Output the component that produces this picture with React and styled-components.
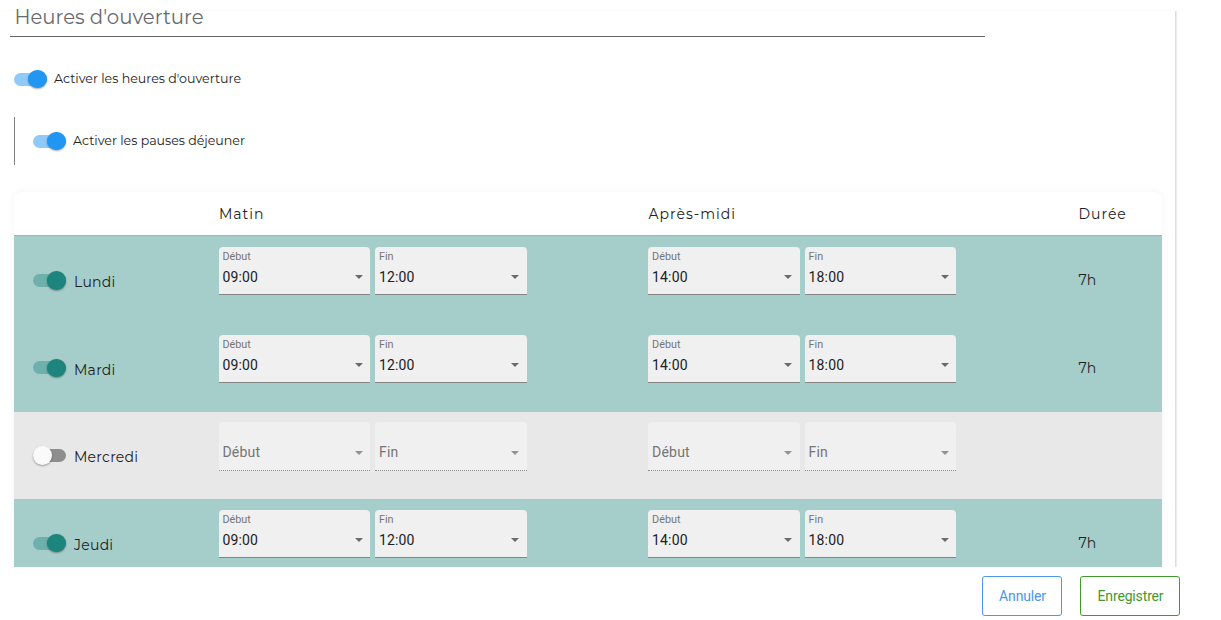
import React, { useState } from 'react'
import styled, { createGlobalStyle, ThemeProvider } from 'styled-components'

const theme = {
  colors: {
    text: '#212121',
    title: '#666a6f',
    blue: '#2196f3',
    blueTrack: '#90caf9',
    green: '#1d857d',
    greenTrack: '#6eb0ab',
    rowOn: '#a5ceca',
    rowOff: '#e8e8e8',
    field: '#f0f0f0',
    cancel: '#4a98e6',
    save: '#44992c',
  },
  fonts: {
    heading: "Montserrat, Inter, 'Open Sans', sans-serif",
    body: "Roboto, 'Liberation Sans', sans-serif",
  },
};

const GlobalStyle = createGlobalStyle`
  * {
    box-sizing: border-box;
  }

  body {
    margin: 0;
    background: #fff;
    color: ${({theme}) => theme.colors.text};
    font-family: ${({theme}) => theme.fonts.heading};
  }
`;

const Page = styled.div`
  display: flex;
  flex-direction: column;
  width: 1221px;
  height: 620px;
  overflow: hidden;
`;

const ScrollArea = styled.div`
  height: 567px;
  padding-top: 11px;
  overflow: hidden;
`;

const Card = styled.section`
  width: 1176px;
  height: 900px;
  padding-left: 14px;
  border-right: 1px solid #dedede;
  box-shadow: 1px 0 1px rgba(0, 0, 0, 0.07);
`;

const Title = styled.h2`
  width: 975px;
  height: 26px;
  margin: 0 0 0 -4px;
  padding-left: 4.4px;
  border-bottom: 1px solid #5f6368;
  color: ${({theme}) => theme.colors.title};
  font-size: 19.7px;
  font-weight: 400;
  line-height: 13px;
`;

const Option = styled.div`
  display: flex;
  align-items: center;
  height: 48px;
  margin-top: ${({$nested}) => $nested ? '14px' : '18px'};
  padding-left: ${({$nested}) => $nested ? '18px' : '0'};
  border-left: ${({$nested}) => $nested ? '1px solid #808080' : 'none'};
`;

const OptionLabel = styled.span`
  margin-left: 7px;
  padding-bottom: 2px;
  font-size: 12.6px;
`;

const Track = styled.button`
  display: flex;
  align-items: center;
  justify-content: ${({$on}) => $on ? 'flex-end' : 'flex-start'};
  flex: none;
  width: 32.5px;
  height: 13px;
  margin: 0 0.5px 0 0;
  padding: 0;
  border: none;
  border-radius: 7px;
  background: ${({theme, $on, $color}) => $on ? theme.colors[$color + 'Track'] : '#8e8e8e'};
  cursor: pointer;
`;

const Thumb = styled.span`
  flex: none;
  width: 18.5px;
  height: 18.5px;
  border-radius: 50%;
  background: ${({theme, $on, $color}) => $on ? theme.colors[$color] : '#fafafa'};
  box-shadow: 0 1px 2px rgba(0, 0, 0, 0.35);
`;

const Table = styled.div`
  width: 1148px;
  margin-top: 27px;
  border-radius: 8px 8px 0 0;
  box-shadow: 0 0 9px rgba(0, 0, 0, 0.05);
`;

const HeaderRow = styled.div`
  display: grid;
  grid-template-columns: 204.7px 429.6px 429.9px 1fr;
  align-items: center;
  height: 44.4px;
  border-bottom: 1px solid #a9b0af;
  font-size: 14px;
`;

const HeaderCell = styled.span`
  padding: 1px 0 0 0.3px;
  letter-spacing: 1px;
`;

const DayRow = styled.div`
  display: grid;
  grid-template-columns: 204.7px 429.6px 429.9px 1fr;
  height: 87.6px;
  padding-top: 10.6px;
  background: ${({theme, $on}) => $on ? theme.colors.rowOn : theme.colors.rowOff};
`;

const DayCell = styled.div`
  display: flex;
  align-items: center;
  height: 66.6px;
  padding-left: 19px;
`;

const DayName = styled.span`
  margin-left: 8px;
  padding-top: 3.4px;
  font-size: 14px;
  letter-spacing: 0.25px;
`;

const Duration = styled.span`
  display: flex;
  align-items: center;
  height: 67px;
  padding-left: 0.4px;
  font-size: 14px;
`;

const Period = styled.div`
  display: flex;
  gap: 5px;
`;

const Field = styled.div`
  display: flex;
  align-items: center;
  justify-content: space-between;
  width: 151.5px;
  height: ${({$on}) => $on ? '48px' : '49px'};
  padding: 0 6.5px 0 3.8px;
  border-bottom: 1px ${({$on}) => $on ? 'solid #858585' : 'dotted #8c8c8c'};
  border-radius: 4px 4px 0 0;
  background: ${({theme}) => theme.colors.field};
  font-family: ${({theme}) => theme.fonts.body};
`;

const FieldText = styled.div`
  display: flex;
  flex-direction: column;
  padding: ${({$on}) => $on ? '0 0 5px' : '12px 0 0'};
`;

const FieldLabel = styled.span`
  color: #757575;
  font-size: ${({$on}) => $on ? '10.8px' : '14px'};
  line-height: ${({$on}) => $on ? '16px' : '20px'};
  letter-spacing: ${({$on}) => $on ? '0' : '0.2px'};
`;

const FieldValue = styled.span`
  margin-top: 2px;
  font-size: 14px;
  line-height: 20px;
  letter-spacing: 0.15px;
`;

const Arrow = styled.span`
  width: 0;
  height: 0;
  margin: 13px 1px 0 0;
  border: 4px solid transparent;
  border-top-color: ${({$on}) => $on ? '#6b6b6b' : '#929292'};
  border-bottom: none;
`;

const Footer = styled.footer`
  display: flex;
  justify-content: flex-end;
  gap: 18px;
  padding: 9px 41px 0 0;
`;

const ActionButton = styled.button`
  width: ${({$width}) => $width};
  height: 40px;
  padding: 0 0 0 1px;
  border: 1px solid ${({theme, $color}) => theme.colors[$color]};
  border-radius: 3px;
  background: #fff;
  color: ${({theme, $color}) => theme.colors[$color]};
  font-family: ${({theme}) => theme.fonts.body};
  font-size: 14px;
  letter-spacing: -0.15px;
  cursor: pointer;
`;

const initialDays = [
  { name: 'Lundi', on: true },
  { name: 'Mardi', on: true },
  { name: 'Mercredi', on: false },
  { name: 'Jeudi', on: true },
];

const Switch = ({ on, color, label, onToggle }) => (
  <Track role='switch' aria-checked={on} aria-label={label} $on={on} $color={color} onClick={onToggle}>
    <Thumb $on={on} $color={color} />
  </Track>
)

const TimeField = ({ label, value, on }) => (
  <Field $on={on}>
    <FieldText $on={on}>
      <FieldLabel $on={on}>{label}</FieldLabel>
      {on && <FieldValue>{value}</FieldValue>}
    </FieldText>
    <Arrow $on={on} />
  </Field>
)

const App = () => {
  const [opening, setOpening] = useState(true);
  const [lunch, setLunch] = useState(true);
  const [days, setDays] = useState(initialDays);

  const toggleDay = (name) => {
    setDays(days.map((day) => day.name === name ? { ...day, on: !day.on } : day));
  }

  return (
    <ThemeProvider theme={theme}>
      <GlobalStyle />
      <Page>
        <ScrollArea>
          <Card>
            <Title>Heures d'ouverture</Title>
            <Option>
              <Switch on={opening} color='blue' label='Heures' onToggle={() => setOpening(!opening)} />
              <OptionLabel>Activer les heures d'ouverture</OptionLabel>
            </Option>
            <Option $nested>
              <Switch on={lunch} color='blue' label='Pauses' onToggle={() => setLunch(!lunch)} />
              <OptionLabel>Activer les pauses déjeuner</OptionLabel>
            </Option>

            <Table>
              <HeaderRow>
                <span />
                <HeaderCell>Matin</HeaderCell>
                <HeaderCell>Après-midi</HeaderCell>
                <HeaderCell>Durée</HeaderCell>
              </HeaderRow>
              {days.map(({ name, on }) => (
                <DayRow key={name} $on={on}>
                  <DayCell>
                    <Switch on={on} color='green' label={name} onToggle={() => toggleDay(name)} />
                    <DayName>{name}</DayName>
                  </DayCell>
                  <Period>
                    <TimeField label='Début' value='09:00' on={on} />
                    <TimeField label='Fin' value='12:00' on={on} />
                  </Period>
                  <Period>
                    <TimeField label='Début' value='14:00' on={on} />
                    <TimeField label='Fin' value='18:00' on={on} />
                  </Period>
                  <Duration>{on && '7h'}</Duration>
                </DayRow>
              ))}
            </Table>
          </Card>
        </ScrollArea>

        <Footer>
          <ActionButton $color='cancel' $width='80px'>Annuler</ActionButton>
          <ActionButton $color='save' $width='100px'>Enregistrer</ActionButton>
        </Footer>
      </Page>
    </ThemeProvider>
  )
}

export default App
